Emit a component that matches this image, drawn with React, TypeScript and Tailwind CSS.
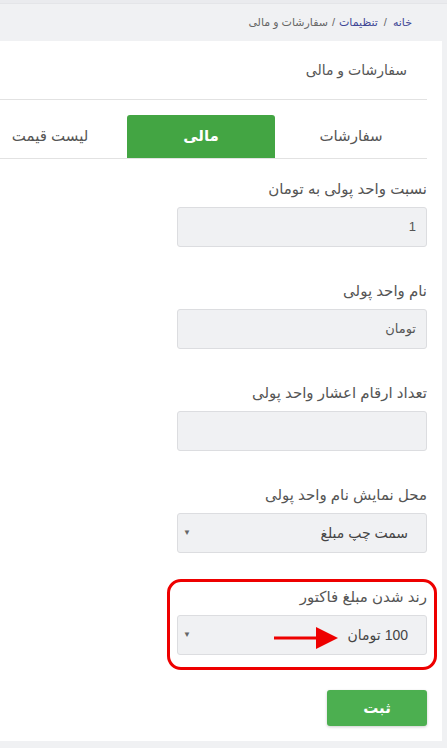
const font = "font-['Liberation_Sans','DejaVu_Sans',sans-serif]"

function Field({ label, children }: { label: string; children: React.ReactNode }) {
  return (
    <div className="w-[250px]">
      <label className="block text-[15px] leading-5 text-[#555] mb-2">{label}</label>
      {children}
    </div>
  )
}

function TextBox({ value }: { value?: string }) {
  return (
    <div className="h-10 rounded-[3px] border border-[#dcdde0] bg-[#f0f1f3] pr-[10px] flex items-center text-[13px] text-[#555]">
      {value}
    </div>
  )
}

function SelectBox({ value, children }: { value: string; children?: React.ReactNode }) {
  return (
    <div className="relative h-10 rounded-[3px] border border-[#dcdde0] bg-[#f0f1f3] pr-[18px] pl-[5px] flex items-center justify-between text-[14px] text-[#444]">
      <span>{value}</span>
      <span className="text-[8px] text-[#666]">▼</span>
      {children}
    </div>
  )
}

export default function App() {
  return (
    <div dir="rtl" className={`${font} h-[748px] w-full overflow-hidden bg-[#f0f1f3]`}>
      <div className="h-[4px] border-b border-[#e4e5e8] bg-[#eaebee]" />
      <nav className="h-[37px] pr-[35px] flex items-center text-[11px] text-[#666]">
        <span className="text-[#3f4796]">خانه</span>
        <span className="px-[6px]">/</span>
        <span className="text-[#3f4796]">تنظیمات</span>
        <span className="px-[4px]">/</span>
        <span>سفارشات و مالی</span>
      </nav>

      <div className="mr-[5px] h-[700px] bg-white pr-[15px]">
        <div className="h-[59px] border-b border-[#e2e2e2] pr-5 flex items-center text-[14px] text-[#555]">
          سفارشات و مالی
        </div>

        <div className="flex h-[59px] items-end border-b border-[#e2e2e2] overflow-visible">
          <div className="w-[152px] shrink-0 h-[43px] flex items-center justify-center text-[15px] text-[#555]">سفارشات</div>
          <div className="w-[148px] shrink-0 h-[43px] flex items-center justify-center rounded-t-[3px] bg-[#43a543] text-[15px] font-bold text-white">مالی</div>
          <div className="w-[154px] shrink-0 h-[43px] flex items-center justify-center text-[15px] text-[#555]">لیست قیمت</div>
        </div>

        <div className="pt-5 flex flex-col gap-[34px]">
          <Field label="نسبت واحد پولی به تومان">
            <TextBox value="1" />
          </Field>
          <Field label="نام واحد پولی">
            <TextBox value="تومان" />
          </Field>
          <Field label="تعداد ارقام اعشار واحد پولی">
            <TextBox />
          </Field>
          <Field label="محل نمایش نام واحد پولی">
            <SelectBox value="سمت چپ مبلغ" />
          </Field>
          <div className="relative w-[250px]">
            <Field label="رند شدن مبلغ فاکتور">
              <SelectBox value="100 تومان">
                <svg className="absolute left-[96px] top-[10px]" width="64" height="24" viewBox="0 0 64 24">
                  <line x1="0" y1="12" x2="44" y2="12" stroke="#ee0000" strokeWidth="3" />
                  <polygon points="42,1 64,12 42,23" fill="#ee0000" />
                </svg>
              </SelectBox>
            </Field>
            <div className="pointer-events-none absolute left-[-10px] top-[-8px] bottom-[-15px] w-[270px] rounded-[14px] border-[3px] border-[#ee0000]" />
          </div>
        </div>

        <div className="pt-[35px]">
          <button className="h-9 w-[100px] rounded-[3px] bg-[#4caf50] text-[15px] font-bold text-white shadow-[0_1px_3px_rgba(0,0,0,0.2)]">
            ثبت
          </button>
        </div>
      </div>
    </div>
  )
}
